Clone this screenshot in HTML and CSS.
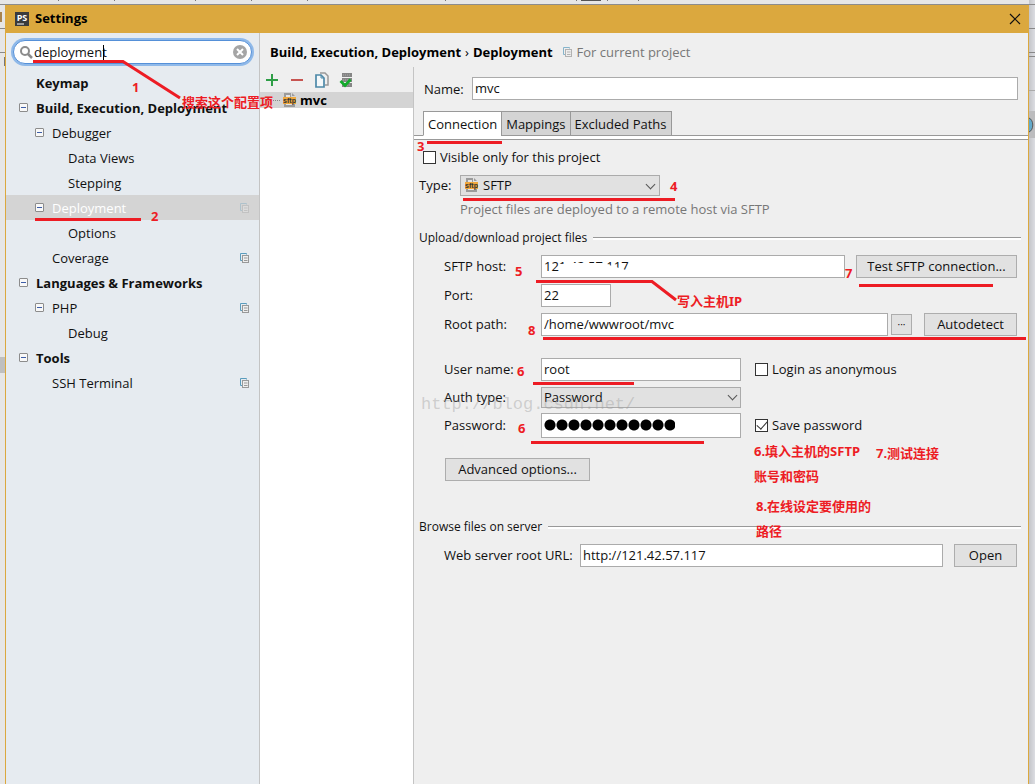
FILE: index.html
```html
<!DOCTYPE html>
<html lang="en">
<head>
<meta charset="utf-8">
<title>Settings</title>
<link rel="stylesheet" href="styles.css">
</head>
<body>
<svg class="defs" aria-hidden="true">
  <symbol id="copy" viewBox="0 0 10 10"><path d="M2.5 7.500H.5V.5H6.500V1.500" fill="none" stroke="#5a9cbd"/><rect x="2.500" y="2.500" width="6" height="7" fill="#eee" stroke="#999"/><path d="M4 5h3.500M4 7.500h3.500" stroke="#999"/></symbol>
  <symbol id="sftp" viewBox="0 0 14 14"><path d="M1 0H8V4H12V14H1Z" fill="#9b9b9b"/><path d="M9 0L12 3H9Z" fill="#9b9b9b"/><path d="M3 2H7V4H3ZM3 11H10V12H3Z" fill="#e4e4e4"/><rect y="4" width="13" height="7" fill="#f0a83c"/><text x="6.500" y="10" class="sftp-text">sftp</text></symbol>
</svg>
<svg class="backdrop" aria-hidden="true">
  <path d="M0 4.500H1035" stroke="#8c8c8c"/>
  <path d="M58.500 0V1M114.500 0V1M195.500 0V1M251.500 0V1M307.500 0V1M445.500 0V1M576.500 0V1M607.500 0V1M638.500 0V1" stroke="#777"/>
  <path d="M581 0H601" stroke="#555" stroke-width="2"/>
  <path d="M0 28.500H5M0 52.500H5M1029 28.500H1035M1029 52.500H1035M1029 56.500H1035" stroke="#888"/>
  <path d="M0 12H2V22H0Z" fill="#a8834e"/>
  <path d="M4 57H5V66H4Z" fill="#777"/>
  <path d="M0 357H5V373H0Z" fill="#bfbfbf"/>
  <path d="M1029 90.500H1035" stroke="#aaa"/>
  <path d="M1029 111H1035V138H1029Z" fill="#bcbcbe"/>
  <path d="M1029 118C1034 120 1034 130 1029 132" fill="#63aacb" stroke="#555"/>
</svg>
<div class="window">
  <header class="titlebar">
    <svg class="logo" viewBox="0 0 14 14"><rect width="14" height="14" fill="#3a3b3d"/><text x="7" y="9" class="logo-text">PS</text><path d="M2 12H9" stroke="#fff"/></svg>
    <h1>Settings</h1>
    <button class="close" aria-label="Close"><svg viewBox="0 0 12 12"><path d="M1 1L11 11M11 1L1 11" stroke="#111" stroke-width="1.200"/></svg></button>
  </header>
  <div class="content">
    <nav class="sidebar">
      <div class="search">
        <svg class="glass" viewBox="0 0 13 13"><circle cx="5" cy="5" r="4" fill="none" stroke="#8c8c8c" stroke-width="2"/><path d="M8 8L12 12" stroke="#8c8c8c" stroke-width="2.500"/></svg>
        <input aria-label="Search" value="deployment">
        <button aria-label="Clear"><svg viewBox="0 0 14 14"><circle cx="7" cy="7" r="7" fill="#a5a5a5"/><path d="M4 4L10 10M10 4L4 10" stroke="#fff" stroke-width="2"/></svg></button>
      </div>
      <ul class="tree">
        <li class="top"><span class="none"></span><span>Keymap</span></li>
        <li class="top"><span class="toggle"></span><span>Build, Execution, Deployment</span></li>
        <li class="mid"><span class="toggle"></span><span>Debugger</span></li>
        <li class="low"><span>Data Views</span></li>
        <li class="low"><span>Stepping</span></li>
        <li class="mid selected"><span class="toggle"></span><span>Deployment</span><svg class="copy"><use href="#copy"/></svg></li>
        <li class="low"><span>Options</span></li>
        <li class="mid"><span class="none"></span><span>Coverage</span><svg class="copy"><use href="#copy"/></svg></li>
        <li class="top"><span class="toggle"></span><span>Languages &amp; Frameworks</span></li>
        <li class="mid"><span class="toggle"></span><span>PHP</span><svg class="copy"><use href="#copy"/></svg></li>
        <li class="low"><span>Debug</span></li>
        <li class="top"><span class="toggle"></span><span>Tools</span></li>
        <li class="mid"><span class="none"></span><span>SSH Terminal</span><svg class="copy"><use href="#copy"/></svg></li>
      </ul>
    </nav>
    <div class="page">
      <div class="crumbs"><b>Build, Execution, Deployment</b><span>›</span><b>Deployment</b><svg class="copy"><use href="#copy"/></svg><span class="muted">For current project</span></div>
      <div class="panes">
        <section class="servers">
          <div class="toolbar">
            <button aria-label="Add"><svg viewBox="0 0 16 16"><path d="M2 8H14M8 2V14" stroke="#2f9e46" stroke-width="2"/></svg></button>
            <button aria-label="Remove"><svg viewBox="0 0 16 16"><path d="M2 8H14" stroke="#c75450" stroke-width="2"/></svg></button>
            <button aria-label="Copy"><svg viewBox="0 0 16 16"><path d="M6 1H11L14 4V13H11" fill="none" stroke="#999" stroke-width="1.500"/><path d="M2 3H7L10 6V15H2Z" fill="#f4f8fa" stroke="#4d89a8" stroke-width="1.700"/><path d="M7 3V6H10" fill="none" stroke="#4d89a8"/></svg></button>
            <button aria-label="Use as default"><svg viewBox="0 0 16 16"><path d="M3 1H13V5H3ZM3 6H13V10H3ZM3 11H13V15H3Z" fill="#858585"/><path d="M4 3H12M4 8H12M4 13H12" stroke="#aaa" stroke-dasharray="1 1"/><path d="M1.500 9L6 13.500L11.500 7.500" fill="none" stroke="#12ab2b" stroke-width="2.700"/></svg></button>
          </div>
          <div class="list"><div class="server"><span class="dots"></span><svg class="sftp"><use href="#sftp"/></svg><b>mvc</b></div></div>
        </section>
        <main class="form">
          <div class="name-row"><label for="name">Name:</label><input id="name" value="mvc"></div>
          <div class="tabs" role="tablist"><button role="tab" class="active" aria-selected="true">Connection</button><button role="tab">Mappings</button><button role="tab">Excluded Paths</button></div>
          <div class="body">
            <label class="check visible"><input type="checkbox">Visible only for this project</label>
            <div class="row type"><label for="type">Type:</label><span class="select-box"><svg class="sftp"><use href="#sftp"/></svg><select id="type" class="with-icon"><option>SFTP</option></select></span></div>
            <p class="hint">Project files are deployed to a remote host via SFTP</p>
            <h2>Upload/download project files</h2>
            <div class="fields">
              <div class="row"><label for="host">SFTP host:</label><input id="host" class="grow" value="121.42.57.117"><button class="btn test">Test SFTP connection...</button></div>
              <div class="row"><label for="port">Port:</label><input id="port" class="port" value="22"></div>
              <div class="row"><label for="path">Root path:</label><input id="path" class="grow" value="/home/wwwroot/mvc"><button class="btn more">···</button><button class="btn auto">Autodetect</button></div>
            </div>
            <div class="fields login">
              <div class="row"><label for="user">User name:</label><input id="user" class="half" value="root"><label class="check"><input type="checkbox">Login as anonymous</label></div>
              <div class="row auth"><label for="auth">Auth type:</label><select id="auth" class="half"><option>Password</option></select></div>
              <div class="row"><label for="pass">Password:</label><input id="pass" type="password" class="half" value="12345678901"><label class="check"><input type="checkbox" checked>Save password</label></div>
              <button class="btn advanced">Advanced options...</button>
            </div>
            <h2>Browse files on server</h2>
            <div class="fields"><div class="row web"><label for="url">Web server root URL:</label><input id="url" class="grow" value="http://121.42.57.117"><button class="btn open">Open</button></div></div>
          </div>
        </main>
      </div>
    </div>
  </div>
</div>
<svg class="notes">
  <path d="M559 264L571 264L573 263L602 263L609 265L626 270V276H559Z" fill="#fff"/>
  <text x="421" y="409" class="watermark">http://blog.csdn.net/</text>
  <path d="M103.500 45V60" stroke="#000"/>
  <g class="marks">
    <path d="M33 61.500H123L180 98"/><path d="M35 219.500H141"/><path d="M427 142.500H502"/><path d="M463 199.500H675"/>
    <path d="M536 281.500H652L676 300"/><path d="M859 285.500H993"/><path d="M543 338.500H1026"/><path d="M533 383.500H634"/><path d="M531 442.500H704"/>
  </g>
  <g class="note">
    <text x="132" y="92">1</text><text x="151" y="221">2</text><text x="417" y="151">3</text><text x="670" y="191">4</text><text x="515" y="276">5</text>
    <text x="517" y="376">6</text><text x="518" y="433">6</text><text x="845" y="278">7</text><text x="528" y="335">8</text>
    <text x="182" y="107">搜索这个配置项</text><text x="677" y="306">写入主机IP</text>
    <text x="754" y="456">6.填入主机的SFTP</text><text x="754" y="481">账号和密码</text><text x="876" y="458">7.测试连接</text>
    <text x="756" y="511">8.在线设定要使用的</text><text x="756" y="536">路径</text>
  </g>
</svg>
</body>
</html>
```
FILE: styles.css
```css
* { box-sizing: border-box; }
body { margin: 0; min-height: 100vh; background: linear-gradient(90deg, #e6e6e6, #e6e6e6 1029px, #c4c5c9 1029px, #dcdde2 1035px); font: 13px/18px "Open Sans", "Noto Sans CJK SC", sans-serif; color: #111; overflow: hidden; }
h1, h2, p, ul { margin: 0; padding: 0; }
button, input, select { font: inherit; color: inherit; margin: 0; }
input { outline: 0; }
.defs { display: none; }
.backdrop, .notes { position: absolute; left: 0; top: 0; width: 100%; height: 100%; pointer-events: none; }
.window { position: relative; display: flex; flex-direction: column; height: calc(100vh - 5px); margin: 5px 6px 0 5px; border: 1px solid #dba83e; border-width: 0 1px; background: #efefef; }
.titlebar { display: flex; align-items: center; gap: 6px; height: 28px; padding: 0 7px 0 9px; background: #dba83e; color: #000; }
.titlebar h1 { flex: 1; font-size: 13px; line-height: 18px; padding-bottom: 2px; }
.logo { width: 14px; height: 14px; }
.logo-text { font: bold 9px "Open Sans", sans-serif; fill: #fff; text-anchor: middle; }
.close { display: flex; padding: 0; border: 0; background: none; }
.close svg { width: 12px; height: 12px; }
.content { flex: 1; display: flex; min-height: 0; }
.sidebar { width: 254px; flex: none; background: #e6ebf0; border-right: 1px solid #c4c4c4; }
.search { display: flex; align-items: center; height: 24px; margin: 7px 7px 6px; padding: 0 4px 0 6px; background: #fff; border: 1px solid #5590d8; border-radius: 12px; box-shadow: 0 0 0 2px #8fb9e9; }
.search input { flex: 1; min-width: 0; border: 0; padding: 0 0 0 1px; background: none; }
.search button { display: flex; padding: 0; border: 0; background: none; }
.search button svg { width: 14px; height: 14px; }
.glass { width: 13px; height: 13px; }
.tree { list-style: none; }
.tree li { display: flex; align-items: center; height: 25px; padding-right: 9px; }
.tree .top { padding-left: 13px; font-weight: bold; }
.tree .mid { padding-left: 29px; }
.tree .low { padding-left: 62px; }
.tree .selected { background: #d4d4d4; color: #fff; }
.tree .copy { margin-left: auto; }
.selected .copy { opacity: .3; }
.none { width: 17px; }
.toggle { width: 9px; height: 9px; margin-right: 8px; border: 1px solid #8c8c8c; border-radius: 1px; background: linear-gradient(#3d5ea8, #3d5ea8) center / 5px 1px no-repeat #f8f8f8; }
.copy { width: 10px; height: 10px; flex: none; }
.page { flex: 1; min-width: 0; display: flex; flex-direction: column; }
.crumbs { display: flex; align-items: center; gap: 4px; height: 34px; padding: 4px 10px 0; color: #000; }
.crumbs .copy { margin-left: 6px; opacity: .7; }
.muted, .hint { color: #777; }
.panes { flex: 1; display: flex; }
.servers { width: 154px; flex: none; display: flex; flex-direction: column; border-right: 1px solid #c4c4c4; }
.toolbar { display: flex; align-items: center; gap: 9px; height: 25px; padding-left: 4px; }
.toolbar button { display: flex; padding: 0; border: 0; background: none; }
.toolbar svg { width: 16px; height: 16px; }
.list { flex: 1; background: #fff; }
.server { display: flex; align-items: center; height: 16px; padding-left: 13px; background: #d4d4d4; color: #000; }
.server b { margin-left: 3px; }
.dots { width: 7px; margin-right: 3px; border-top: 1px dotted #888; }
.sftp { width: 14px; height: 14px; flex: none; }
.sftp-text { font: bold 7px "Liberation Sans", sans-serif; fill: #333; text-anchor: middle; }
.form { flex: 1; min-width: 0; }
.name-row { display: flex; align-items: center; margin: 10px 10px 11px; }
.name-row label { width: 48px; }
.name-row input { flex: 1; }
.form input:not([type="checkbox"]) { height: 23px; min-width: 0; padding: 0 2px 1px; border: 1px solid #ababab; background: #fff; }
.tabs { display: flex; padding-left: 9px; height: 29px; border-bottom: 1px solid #999; background: linear-gradient(#999, #999) 0 24px / 100% 1px no-repeat, linear-gradient(#efefef 24px, #fff 24px); }
.tabs button { height: 25px; padding: 0 4px; margin-right: -1px; border: 1px solid #999; background: #d4d4d4; }
.tabs .active { border-bottom-color: #fff; background: #fff; }
.body { padding: 8px 7px 0 5px; }
.check { display: flex; align-items: center; gap: 4px; }
.check input { appearance: none; position: relative; width: 13px; height: 13px; border: 1px solid #333; background: #fff; }
.check input:checked::after { content: ""; position: absolute; left: 1px; top: 1px; width: 9px; height: 5px; border: solid #333; border-width: 0 0 1px 1px; transform: rotate(-48deg); }
.visible { padding-left: 4px; margin-bottom: 9px; }
.row { display: flex; align-items: center; }
.row label { padding-bottom: 1px; }
.type label { width: 41px; }
.select-box { position: relative; display: flex; width: 200px; }
.select-box .sftp { position: absolute; left: 5px; top: 3px; }
select { appearance: none; width: 100%; height: 21px; padding: 0 2px 1px; border: 1px solid #ababab; border-radius: 0; background: #e1e1e1; }
.select-box::after, .auth::after { content: ""; width: 6px; height: 6px; border: solid #555; border-width: 0 1px 1px 0; transform: rotate(45deg); }
.select-box::after { position: absolute; right: 6px; top: 6px; }
.auth::after { margin: -4px 0 0 -12px; }
.with-icon { padding-left: 22px; }
.hint { margin: 4px 0 11px 41px; }
h2 { display: flex; align-items: center; gap: 6px; font-size: 12px; line-height: 18px; font-weight: normal; }
h2::after { content: ""; flex: 1; height: 2px; border-top: 1px solid #999; background: #fff; }
.fields { display: flex; flex-direction: column; gap: 6px; padding: 8px 4px 0 25px; }
.fields .row > label:first-child { width: 97px; flex: none; }
.grow { flex: 1; }
.port { width: 70px; }
.half { width: 200px; }
.half + .check { margin-left: 14px; }
.login { padding-top: 22px; margin-bottom: 37px; }
.btn { height: 23px; padding: 0 0 1px; border: 1px solid #adadad; background: #e1e1e1; }
.test { width: 161px; margin-left: 11px; }
.more { width: 21px; height: 21px; margin: 0 12px 0 3px; font-size: 10px; line-height: 10px; }
.auto { width: 93px; }
.open { width: 63px; margin-left: 11px; }
.advanced { width: 145px; margin: 14px 0 0 1px; }
.login .row + .row + .row { margin-top: -1px; }
.form #pass { height: 25px; color: transparent; background: linear-gradient(#fff, #fff) 134px 0 no-repeat border-box, radial-gradient(circle, #000 5px, transparent 6px) 2px 5px / 12px 12px repeat-x padding-box content-box, #fff; }
.fields .web > label:first-child { width: 136px; }
.marks path { fill: none; stroke: #ed1c24; stroke-width: 3; }
.note { font: bold 13px "Noto Sans", "Noto Sans CJK SC", sans-serif; fill: #ed1c24; }
.watermark { font: 17px "Liberation Mono", monospace; fill: #999; fill-opacity: .4; }
```
